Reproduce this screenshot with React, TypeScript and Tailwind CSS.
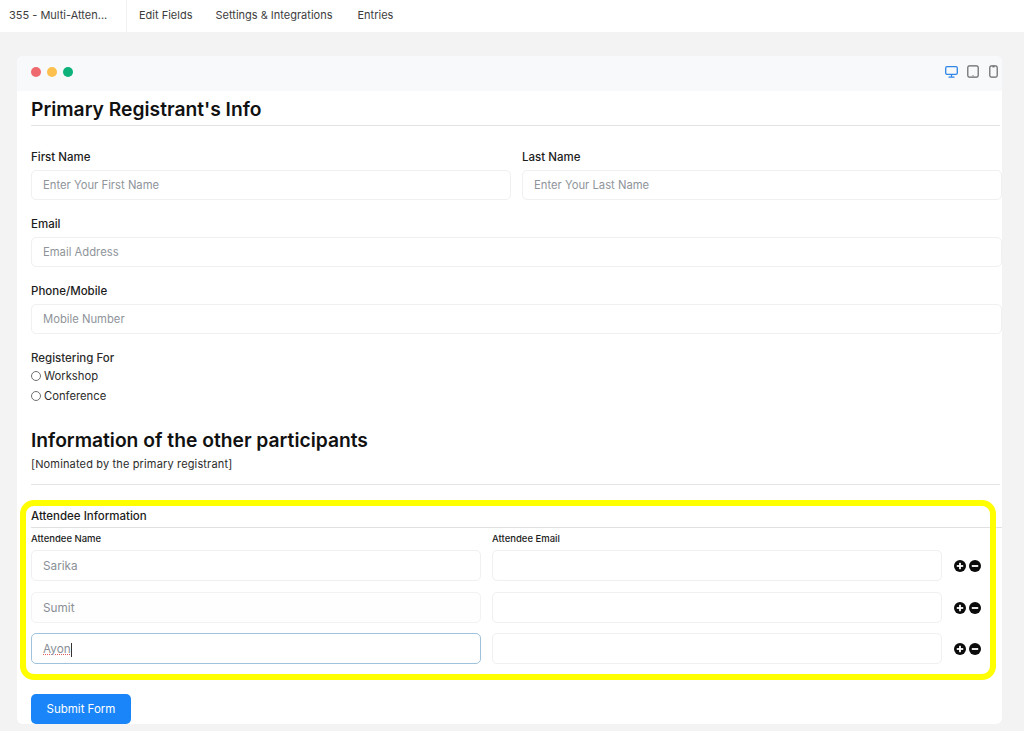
import React from "react";

function Field({ label, placeholder, className = "" }: { label: string; placeholder: string; className?: string }) {
  return (
    <div className={className}>
      <div className="text-[11.5px] leading-[15px] font-medium text-[#1c1c1c] mb-[5px] h-[15px]">{label}</div>
      <div className="h-[30px] rounded-[5px] border border-[#eef0f2] bg-white flex items-center pl-[11px] pt-[1px] text-[11.25px] text-[#8f949a]">
        {placeholder}
      </div>
    </div>
  );
}

function Box({ text, active, muted }: { text?: string; active?: boolean; muted?: boolean }) {
  return (
    <div
      className={
        "h-[31px] flex-1 rounded-[5px] border flex items-center pl-[11px] pt-[2px] text-[11.75px] text-[#8a8f96] " +
        (active ? "border-[#9fc3dc] bg-white" : muted ? "border-[#f1f2f3] bg-[#fefefe]" : "border-[#eff0f2] bg-white")
      }
    >
      {text === "Ayon" ? (
        <>
          <span className="underline decoration-dotted decoration-[#e06060]">Ayon</span>
          <span className="inline-block w-px h-[14px] bg-[#333]" />
        </>
      ) : (
        text
      )}
    </div>
  );
}

function Round({ minus }: { minus?: boolean }) {
  return (
    <svg width="12" height="12" viewBox="0 0 12 12" className="shrink-0">
      <circle cx="6" cy="6" r="6" fill="#0b0b0b" />
      <rect x="2.8" y="5.1" width="6.4" height="1.8" fill="#fff" />
      {!minus && <rect x="5.1" y="2.8" width="1.8" height="6.4" fill="#fff" />}
    </svg>
  );
}

function AttendeeRow({ text, active, muted, className = "" }: { text: string; active?: boolean; muted?: boolean; className?: string }) {
  return (
    <div className={"flex items-center " + className}>
      <div className="flex-1 flex gap-[11px]">
        <Box text={text} active={active} muted={muted} />
        <Box />
      </div>
      <div className="w-[60px] pl-[12px] flex gap-[3px]">
        <Round />
        <Round minus />
      </div>
    </div>
  );
}

function Radio({ label, className = "" }: { label: string; className?: string }) {
  return (
    <div className={"flex items-center h-[15px] text-[11.25px] text-[#2b2b2b] " + className}>
      <span className="w-[10px] h-[10px] rounded-full border border-[#6f6f6f] bg-white mr-[3px] -translate-y-[1px]" />
      {label}
    </div>
  );
}

export default function App() {
  return (
    <div className="w-[1024px] h-[731px] overflow-hidden bg-[#f3f3f4] font-['Inter',sans-serif] antialiased">
      <div className="h-[33px] bg-white flex items-center text-[11px] text-[#3d3d3d] border-b border-[#f3f3f3]">
        <div className="w-[127px] h-full pl-[9px] pb-[2px] flex items-center border-r border-[#f1f1f1]">355 - Multi-Atten...</div>
        <div className="pl-[12px] pb-[2px]">Edit Fields</div>
        <div className="pl-[23px] pb-[2px]">Settings &amp; Integrations</div>
        <div className="pl-[25px] pb-[2px]">Entries</div>
      </div>

      <div className="ml-[17px] mt-[23px] w-[985px] h-[668px] bg-white rounded-[6px] relative">
        <div className="h-[35px] bg-[#f7f9fa] rounded-t-[6px] flex items-center pl-[14px] pr-[4px] pb-[3px]">
          <div className="flex gap-[6px]">
            <span className="w-[10px] h-[10px] rounded-full bg-[#ee6a6f]" />
            <span className="w-[10px] h-[10px] rounded-full bg-[#fcc04f]" />
            <span className="w-[10px] h-[10px] rounded-full bg-[#0cb27a]" />
          </div>
          <div className="ml-auto flex items-center gap-[9px] -mt-[1px]">
            <svg width="13" height="12" viewBox="0 0 13 12" fill="none" stroke="#2f86e6" strokeWidth="1.3">
              <rect x="0.7" y="0.7" width="11.6" height="7.6" rx="1.4" />
              <path d="M6.5 8.3v2.6M3.5 11.2h6" />
            </svg>
            <svg width="12" height="13" viewBox="0 0 12 13" fill="none" stroke="#666" strokeWidth="1.2">
              <rect x="0.8" y="0.8" width="10.4" height="11.4" rx="1.6" />
              <path d="M5.6 10.6h.8" />
            </svg>
            <svg width="9" height="13" viewBox="0 0 9 13" fill="none" stroke="#666" strokeWidth="1.2" className="ml-[1px]">
              <rect x="0.8" y="0.8" width="7.4" height="11.4" rx="1.8" />
              <path d="M3.4 1.8h2.2" />
            </svg>
          </div>
        </div>

        <div className="pl-[14px]">
          <div className="text-[19.25px] leading-[24px] font-semibold text-[#111] mt-[6px] border-b border-[#e2e4e6] w-[969px] h-[29px]">
            Primary Registrant's Info
          </div>

          <div className="flex gap-[11px] mt-[24px] w-[971px]">
            <Field className="flex-1" label="First Name" placeholder="Enter Your First Name" />
            <Field className="flex-1" label="Last Name" placeholder="Enter Your Last Name" />
          </div>
          <Field className="mt-[17px] w-[971px]" label="Email" placeholder="Email Address" />
          <Field className="mt-[17px] w-[971px]" label="Phone/Mobile" placeholder="Mobile Number" />

          <div className="mt-[17px] text-[11.5px] leading-[15px] text-[#2b2b2b] font-medium">Registering For</div>
          <Radio label="Workshop" className="mt-[3px]" />
          <Radio label="Conference" className="mt-[5px]" />

          <div className="mt-[24px] text-[19.25px] leading-[24px] font-semibold text-[#111]">
            Information of the other participants
          </div>
          <div className="mt-[5px] text-[11px] leading-[15px] text-[#2b2b2b] tracking-[0.15px]">[Nominated by the primary registrant]</div>
          <div className="mt-[12px] h-px bg-[#e2e4e6] w-[969px]" />

          <div className="mt-[24px] text-[11.5px] leading-[15px] font-medium text-[#1c1c1c] border-b border-[#dfe1e3] w-[971px] h-[19px]">
            Attendee Information
          </div>
          <div className="flex gap-[11px] w-[911px] mt-[5px] text-[9.5px] leading-[12px] font-medium text-[#1c1c1c]">
            <div className="flex-1">Attendee Name</div>
            <div className="flex-1">Attendee Email</div>
          </div>
          <div className="mt-[5px] w-[971px]">
            <AttendeeRow text="Sarika" className="mb-[11px]" />
            <AttendeeRow text="Sumit" muted className="mb-[10px]" />
            <AttendeeRow text="Ayon" active />
          </div>

          <div className="mt-[30px] w-[100px] h-[30px] pt-[1px] rounded-[5px] bg-[#1a85f8] text-white text-[11.5px] flex items-center justify-center">
            Submit Form
          </div>
        </div>

        <div className="absolute left-[3px] top-[444px] w-[976px] h-[180px] border-[6px] border-[#ffff00] rounded-[14px] pointer-events-none" />
      </div>
    </div>
  );
}
